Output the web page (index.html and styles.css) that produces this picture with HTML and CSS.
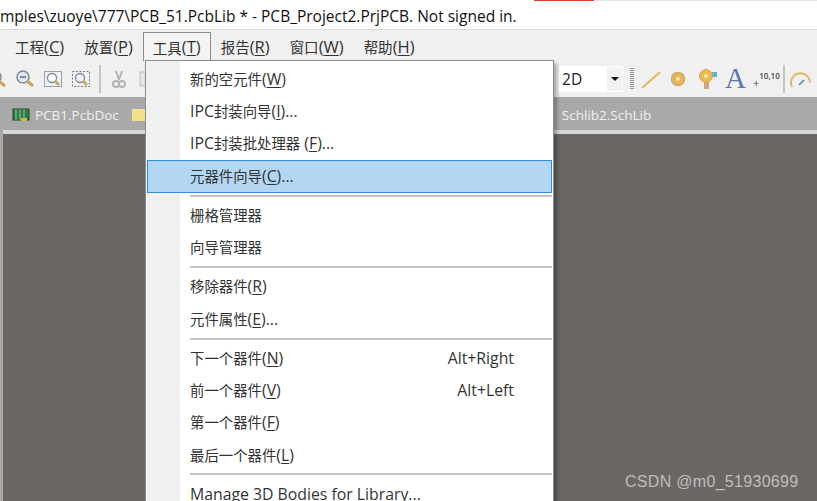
FILE: index.html
```html
<!DOCTYPE html>
<html lang="en">
<head>
  <meta charset="UTF-8">
  <meta name="viewport" content="width=device-width, initial-scale=1">
  <title>PCB_51.PcbLib</title>
  <link rel="stylesheet" href="styles.css">
</head>
<body>

  <div class="app">
    <div class="titlebar">
      <div class="progress"><span class="progress-red"></span></div>
      <div class="title-text">mples\zuoye\777\PCB_51.PcbLib * - PCB_Project2.PrjPCB. Not signed in.</div>
    </div>

    <div class="menubar">
      <span class="menu-top">工程<span class="en">(<u>C</u>)</span></span>
      <span class="menu-top">放置<span class="en">(<u>P</u>)</span></span>
      <span class="menu-top active">工具<span class="en">(<u>T</u>)</span></span>
      <span class="menu-top">报告<span class="en">(<u>R</u>)</span></span>
      <span class="menu-top">窗口<span class="en">(<u>W</u>)</span></span>
      <span class="menu-top">帮助<span class="en">(<u>H</u>)</span></span>
    </div>

    <div class="toolbar">
      <div class="tools-left">
        <svg class="icon" viewBox="0 0 20 20"><circle cx="8" cy="8" r="6" fill="#dfe6ee" stroke="#7d8a99" stroke-width="1.5"/><path d="M5 8h6M8 5v6" stroke="#55708f" stroke-width="1.5"/><path d="M12 12l6 5" stroke="#c9a45a" stroke-width="3"/></svg>
        <svg class="icon" viewBox="0 0 20 20"><circle cx="8" cy="8" r="6" fill="#dfe6ee" stroke="#7d8a99" stroke-width="1.5"/><path d="M5 8h6" stroke="#55708f" stroke-width="1.5"/><path d="M12 12l6 5" stroke="#c9a45a" stroke-width="3"/></svg>
        <svg class="icon" viewBox="0 0 20 20"><rect x="1.5" y="2.5" width="17" height="15" fill="#eef1f4" stroke="#9aa3ad"/><circle cx="9" cy="9" r="4.5" fill="#fff" stroke="#7d8a99" stroke-width="1.3"/><path d="M12 12l4 4" stroke="#c9a45a" stroke-width="2.5"/></svg>
        <svg class="icon" viewBox="0 0 20 20"><rect x="1.5" y="2.5" width="17" height="15" fill="none" stroke="#77808a" stroke-dasharray="2 1.5"/><circle cx="9" cy="9" r="4.5" fill="#eef1f4" stroke="#7d8a99" stroke-width="1.3"/><path d="M12 12l4 4" stroke="#c9a45a" stroke-width="2.5"/></svg>
        <span class="tool-sep"></span>
        <svg class="icon" viewBox="0 0 20 20"><path d="M7 2l3 9M13 2l-3 9" stroke="#b4b4b4" stroke-width="2"/><circle cx="7" cy="15" r="3" fill="none" stroke="#b4b4b4" stroke-width="2"/><circle cx="13" cy="15" r="3" fill="none" stroke="#b4b4b4" stroke-width="2"/></svg>
        <svg class="icon" viewBox="0 0 20 20"><rect x="3" y="3" width="11" height="14" fill="#e6e6e6" stroke="#bdbdbd"/></svg>
      </div>
      <div class="tools-right">
        <div class="view-select"><span class="view-value">2D</span><span class="view-arrow"></span></div>
        <span class="grip"></span>
        <svg class="icon" viewBox="0 0 20 20"><path d="M1 19L19 3" stroke="#e5b755" stroke-width="2"/></svg>
        <svg class="icon" viewBox="0 0 20 20"><circle cx="10" cy="10" r="6.5" fill="#e8b64f" stroke="#c9a97a" stroke-width="1.5"/><circle cx="10" cy="10" r="2" fill="#f6e6bd"/></svg>
        <svg class="icon icon-wide" viewBox="0 0 24 22"><rect x="9" y="14" width="5" height="7" fill="#cfa679"/><rect x="14" y="4" width="8" height="5" fill="#5cb4d0"/><circle cx="11" cy="8" r="6.5" fill="#ecb94c" stroke="#d3aa6e"/><circle cx="11" cy="8" r="2" fill="#f8e9c0"/></svg>
        <span class="letter-a">A</span>
        <span class="coords"><span class="coords-plus">+</span><span class="coords-num">10,10</span></span>
        <span class="tool-sep"></span>
        <svg class="icon icon-wide" viewBox="0 0 24 22"><path d="M3 19A9.5 9.5 0 1 1 21 15" fill="none" stroke="#e5b66a" stroke-width="2"/><path d="M10 17l5-5" stroke="#5878b0" stroke-width="1.5"/></svg>
      </div>
    </div>

    <div class="tabbar">
      <span class="tab">
        <svg class="tab-icon" viewBox="0 0 18 14"><rect x="1" y="1" width="16" height="11" fill="#2f7d46" stroke="#1d4a2b"/><path d="M4 1v11M8 1v11M12 1v11" stroke="#8fc89e"/><rect x="9" y="10" width="6" height="3" fill="#d6b93c"/></svg>
        PCB1.PcbDoc
      </span>
      <span class="tab-folder"></span>
      <span class="tab tab-last">
        <svg class="tab-icon" viewBox="0 0 14 14"><path d="M7 0v14M3 3h8M3 7h8M3 11h8" stroke="#3f66b0" stroke-width="1.4"/></svg>
        Schlib2.SchLib
      </span>
    </div>
    <div class="tab-strip"></div>
    <div class="workspace"></div>
  </div>

  <!-- Open Tools menu -->
  <div class="menu">
    <div class="menu-item"><span>新的空元件<span class="en">(<u>W</u>)</span></span></div>
    <div class="menu-item"><span><span class="en">IPC</span>封装向导<span class="en">(<u>I</u>)...</span></span></div>
    <div class="menu-item"><span><span class="en">IPC</span>封装批处理器<span class="en"> (<u>F</u>)...</span></span></div>
    <div class="menu-item selected"><span>元器件向导<span class="en">(<u>C</u>)...</span></span></div>
    <div class="menu-line"></div>
    <div class="menu-item"><span>栅格管理器</span></div>
    <div class="menu-item"><span>向导管理器</span></div>
    <div class="menu-line"></div>
    <div class="menu-item"><span>移除器件<span class="en">(<u>R</u>)</span></span></div>
    <div class="menu-item"><span>元件属性<span class="en">(<u>E</u>)...</span></span></div>
    <div class="menu-line"></div>
    <div class="menu-item"><span>下一个器件<span class="en">(<u>N</u>)</span></span><span class="en">Alt+Right</span></div>
    <div class="menu-item"><span>前一个器件<span class="en">(<u>V</u>)</span></span><span class="en">Alt+Left</span></div>
    <div class="menu-item"><span>第一个器件<span class="en">(<u>F</u>)</span></span></div>
    <div class="menu-item"><span>最后一个器件<span class="en">(<u>L</u>)</span></span></div>
    <div class="menu-line"></div>
    <div class="menu-item"><span class="en">Manage 3D Bodies for Library...</span></div>
  </div>

  <div class="watermark">CSDN @m0_51930699</div>

</body>
</html>
```

FILE: styles.css
```css
* {
  box-sizing: border-box;
}

html, body {
  height: 100%;
}

body {
  margin: 0;
  overflow: hidden;
  font-family: "Open Sans", "Noto Sans CJK SC", sans-serif;
  color: #222;
  background-color: #6b6764;
}

u {
  text-underline-offset: 2px;
}

.app {
  display: flex;
  flex-direction: column;
  height: 501px;
  background-color: #a9a9a9;
}

.titlebar {
  height: 30px;
  background-color: #fff;
  border-bottom: 1px solid #d9d9d9;
}

.progress {
  display: flex;
  height: 1px;
  margin-left: 534px;
  background-color: #e4e4e4;
}

.progress-red {
  width: 60px;
  background-color: #d9402a;
}

.title-text {
  padding-top: 4px;
  font-size: 15.5px;
  line-height: 22px;
  white-space: nowrap;
  color: #111;
}

.menubar {
  display: flex;
  height: 31px;
  padding: 2px 0 0 5px;
  background-color: #f0f0f0;
}

.menu-top {
  display: flex;
  align-items: center;
  height: 29px;
  padding: 0 10px;
  font-size: 14.5px;
  color: #333;
  white-space: nowrap;
}

.menu-top .en {
  font-size: 16.5px;
  line-height: 20px;
}

.menu-top.active {
  border: 1px solid #8c8c8c;
  border-bottom: none;
  padding: 0 9px;
  background-color: #f4f4f4;
}

.toolbar {
  display: flex;
  justify-content: space-between;
  align-items: center;
  height: 36px;
  background-color: #f0f0f0;
}

.tools-left, .tools-right {
  display: flex;
  align-items: center;
}

.tools-left {
  gap: 8px;
  margin-left: -13px;
}

.tools-right {
  gap: 7px;
  margin-right: 4px;
}

.icon {
  width: 20px;
  height: 20px;
}

.icon-wide {
  width: 24px;
  height: 22px;
}

.tool-sep {
  width: 2px;
  height: 28px;
  background-color: #c4c4c4;
}

.tools-right .tool-sep {
  margin: 0 -3px;
}

.view-select {
  display: flex;
  align-items: center;
  justify-content: space-between;
  width: 64px;
  height: 26px;
  padding-left: 3px;
  background-color: #fff;
  font-size: 15.5px;
}

.view-arrow {
  display: flex;
  align-items: center;
  justify-content: center;
  width: 15px;
  height: 24px;
  margin-right: 1px;
  background-color: #f2f2f2;
}

.view-arrow::after {
  content: "";
  border-top: 4px solid #111;
  border-left: 4px solid transparent;
  border-right: 4px solid transparent;
}

.grip {
  width: 4px;
  height: 22px;
  background-image: repeating-linear-gradient(#999 0 1px, #eee 1px 2px);
}

.letter-a {
  margin: -2px 0 0 -1px;
  font-family: "Liberation Serif", serif;
  font-size: 29px;
  line-height: 24px;
  color: #5c78ae;
}

.coords {
  display: flex;
  align-items: flex-start;
  width: 26px;
  color: #444;
  white-space: nowrap;
}

.coords-plus {
  padding-top: 7px;
  font-size: 11px;
  line-height: 11px;
}

.coords-num {
  font-size: 8px;
  font-weight: 600;
  line-height: 12px;
}

.tabbar {
  display: flex;
  align-items: center;
  gap: 13px;
  height: 33px;
  padding: 2px 0 0 12px;
  background-color: #a9a9a9;
}

.tab {
  display: flex;
  align-items: center;
  gap: 5px;
  font-size: 13.5px;
  color: #f0f0f0;
  white-space: nowrap;
}

.tab-icon {
  width: 18px;
  height: 14px;
}

.tab-folder {
  width: 13px;
  height: 12px;
  background-color: #f4e08a;
}

.tab-last {
  margin-left: 381px;
}

.tab-strip {
  height: 4px;
  margin-left: 3px;
  background-color: #d6d6d6;
}

.workspace {
  flex: 1;
  margin-left: 3px;
  background-color: #6b6764;
}

.menu {
  position: absolute;
  left: 145px;
  top: 60px;
  width: 409px;
  height: 441px;
  padding: 2px 1px 0;
  overflow: hidden;
  border: 1px solid #8c8c8c;
  border-bottom: none;
  box-shadow: 3px 3px 4px rgba(0,0,0,0.3);
  background: linear-gradient(90deg, #f0f0f0 34px, #fff 34px);
}

.menu-item {
  display: flex;
  justify-content: space-between;
  align-items: center;
  height: 32.4px;
  padding: 0 38px 0 43px;
  font-size: 14.4px;
  line-height: 20px;
  color: #333;
  white-space: nowrap;
}

.menu-item .en {
  font-size: 15.8px;
}

.menu-item.selected {
  height: 33px;
  background-color: #b3d7f3;
  border: 1px solid #2e8fe0;
  padding-left: 42px;
}

.menu-line {
  height: 2px;
  margin: 2px 0 2.4px 43px;
  background-color: #c4c4c4;
}

.watermark {
  position: absolute;
  left: 625px;
  top: 472px;
  font-family: "Liberation Sans", sans-serif;
  font-size: 16px;
  line-height: 20px;
  letter-spacing: 0.3px;
  color: rgba(220,220,220,0.75);
}
```
